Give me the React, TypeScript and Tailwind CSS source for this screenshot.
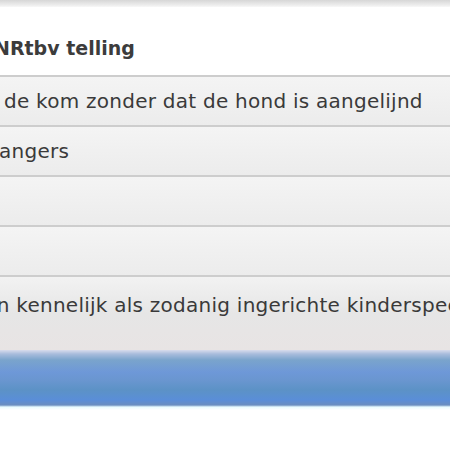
import React from 'react';

const rows = [
  { label: 'de kom zonder dat de hond is aangelijnd', shift: 'ml-[4px]' },
  { label: 'angers', shift: 'ml-[-1px]' },
  { label: '', shift: '' },
  { label: '', shift: '' },
];

export default function App() {
  return (
    <div className="w-[450px] h-[450px] overflow-hidden bg-white font-['DejaVu_Sans',sans-serif] text-[#3a3a3a]">
      {/* top edge of the previous panel */}
      <div className="h-[7px] bg-[linear-gradient(#d6d6d6,#ececec_70%,#f8f8f8)]" />

      {/* section heading */}
      <div className="h-[68px] flex items-end pb-[13px] whitespace-nowrap overflow-hidden">
        <span className="ml-[-6px] text-[19px] font-bold text-[#3c3c3c]">NRtbv telling</span>
      </div>

      {/* list rows */}
      {rows.map((row, i) => (
        <div
          key={i}
          className="h-[50px] first:h-[52px] border-t-2 border-[#cdcdcd] bg-[linear-gradient(#f4f4f4,#ececec)] flex items-center whitespace-nowrap overflow-hidden"
        >
          <span className={`${row.shift} text-[20px] tracking-[0.25px]`}>{row.label}</span>
        </div>
      ))}
      <div className="h-[75px] border-t-2 border-[#cdcdcd] bg-[linear-gradient(#f2f2f2,#e6e6e6_50%,#e8e4e4)] whitespace-nowrap overflow-hidden pt-[13px]">
        <span className="ml-[-9px] text-[20px] tracking-[0.25px]">in kennelijk als zodanig ingerichte kinderspeelplaats</span>
      </div>

      {/* selected / highlight bar */}
      <div className="h-[60px] bg-[linear-gradient(#d8dcec_0px,#a8bcdc_4px,#7aa4cc_10px,#6e98d8_22px,#6a96d0_30px,#5c92c6_40px,#5a8ed8_50px,#6a8ec0_55px,#e8fcff_57px,#ffffff)]" />
    </div>
  );
}
